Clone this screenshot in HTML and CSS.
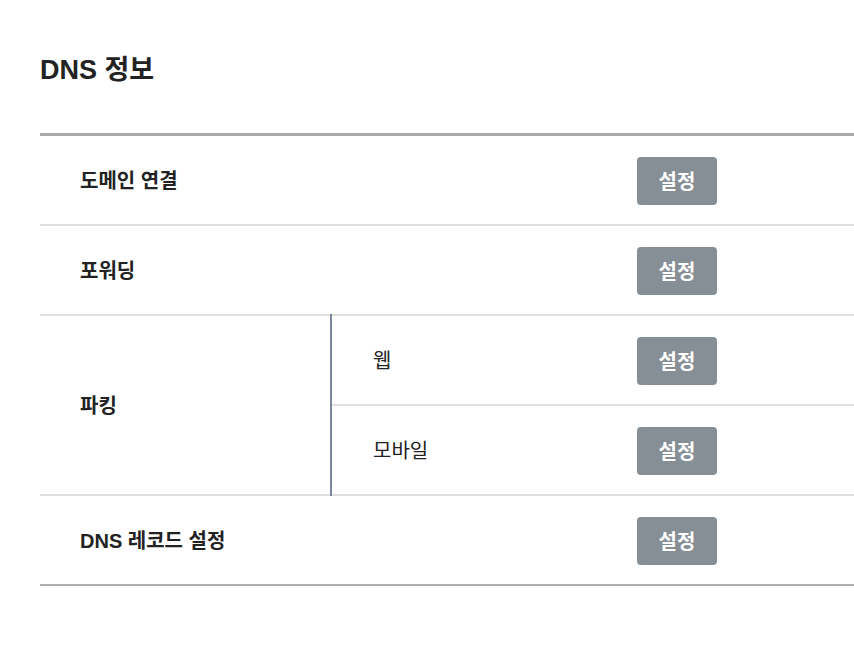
FILE: index.html
```html
<!DOCTYPE html>
<html lang="ko">
  <head>
    <meta charset="UTF-8" />
    <meta name="viewport" content="width=device-width, initial-scale=1.0" />
    <title>DNS 정보</title>
    <link rel="stylesheet" href="styles.css">
  </head>
  <body>
    <h2 class="title">DNS 정보</h2>
    <table class="dns-table">
      <colgroup>
        <col class="col-label" />
        <col class="col-sub" />
        <col class="col-action" />
      </colgroup>
      <tbody>
        <tr>
          <th colspan="2">도메인 연결</th>
          <td class="action"><button class="set-btn">설정</button></td>
        </tr>
        <tr>
          <th colspan="2">포워딩</th>
          <td class="action"><button class="set-btn">설정</button></td>
        </tr>
        <tr>
          <th rowspan="2" class="group">파킹</th>
          <td class="sub">웹</td>
          <td class="action"><button class="set-btn">설정</button></td>
        </tr>
        <tr>
          <td class="sub">모바일</td>
          <td class="action"><button class="set-btn">설정</button></td>
        </tr>
        <tr>
          <th colspan="2">DNS 레코드 설정</th>
          <td class="action"><button class="set-btn">설정</button></td>
        </tr>
      </tbody>
    </table>
  </body>
</html>
```

FILE: styles.css
```css
body {
  margin: 0;
  padding: 0 0 0 40px;
  font-family: "Liberation Sans", "Noto Sans CJK KR", sans-serif;
  color: #222;
  background: #fff;
}
.title {
  margin: 52px 0 45px;
  font-size: 27px;
  font-weight: bold;
  line-height: 36px;
}
.dns-table {
  width: 814px;
  border-collapse: collapse;
  table-layout: fixed;
  border-top: 3px solid #aaaaaa;
  border-bottom: 2px solid #b0b0b0;
}
.col-label {
  width: 291px;
}
.col-sub {
  width: 306px;
}
.col-action {
  width: 217px;
}
.dns-table tr {
  height: 90px;
}
.dns-table th,
.dns-table td {
  border-top: 2px solid #e0e0e0;
  padding: 0;
  vertical-align: middle;
  font-size: 20px;
}
.dns-table tr:first-child th,
.dns-table tr:first-child td {
  border-top: none;
}
.dns-table th {
  padding-left: 40px;
  text-align: left;
  font-weight: bold;
}
.dns-table th.group {
  border-right: 2px solid #7a8699;
}
.dns-table td.sub {
  padding-left: 41px;
}
.dns-table td.action {
  padding-top: 2px;
}
.set-btn {
  display: block;
  width: 80px;
  height: 48px;
  border: none;
  border-radius: 4px;
  background-color: #868e96;
  color: #fff;
  font-family: "Liberation Sans", "Noto Sans CJK KR", sans-serif;
  font-size: 20px;
  font-weight: bold;
  cursor: pointer;
}
```
